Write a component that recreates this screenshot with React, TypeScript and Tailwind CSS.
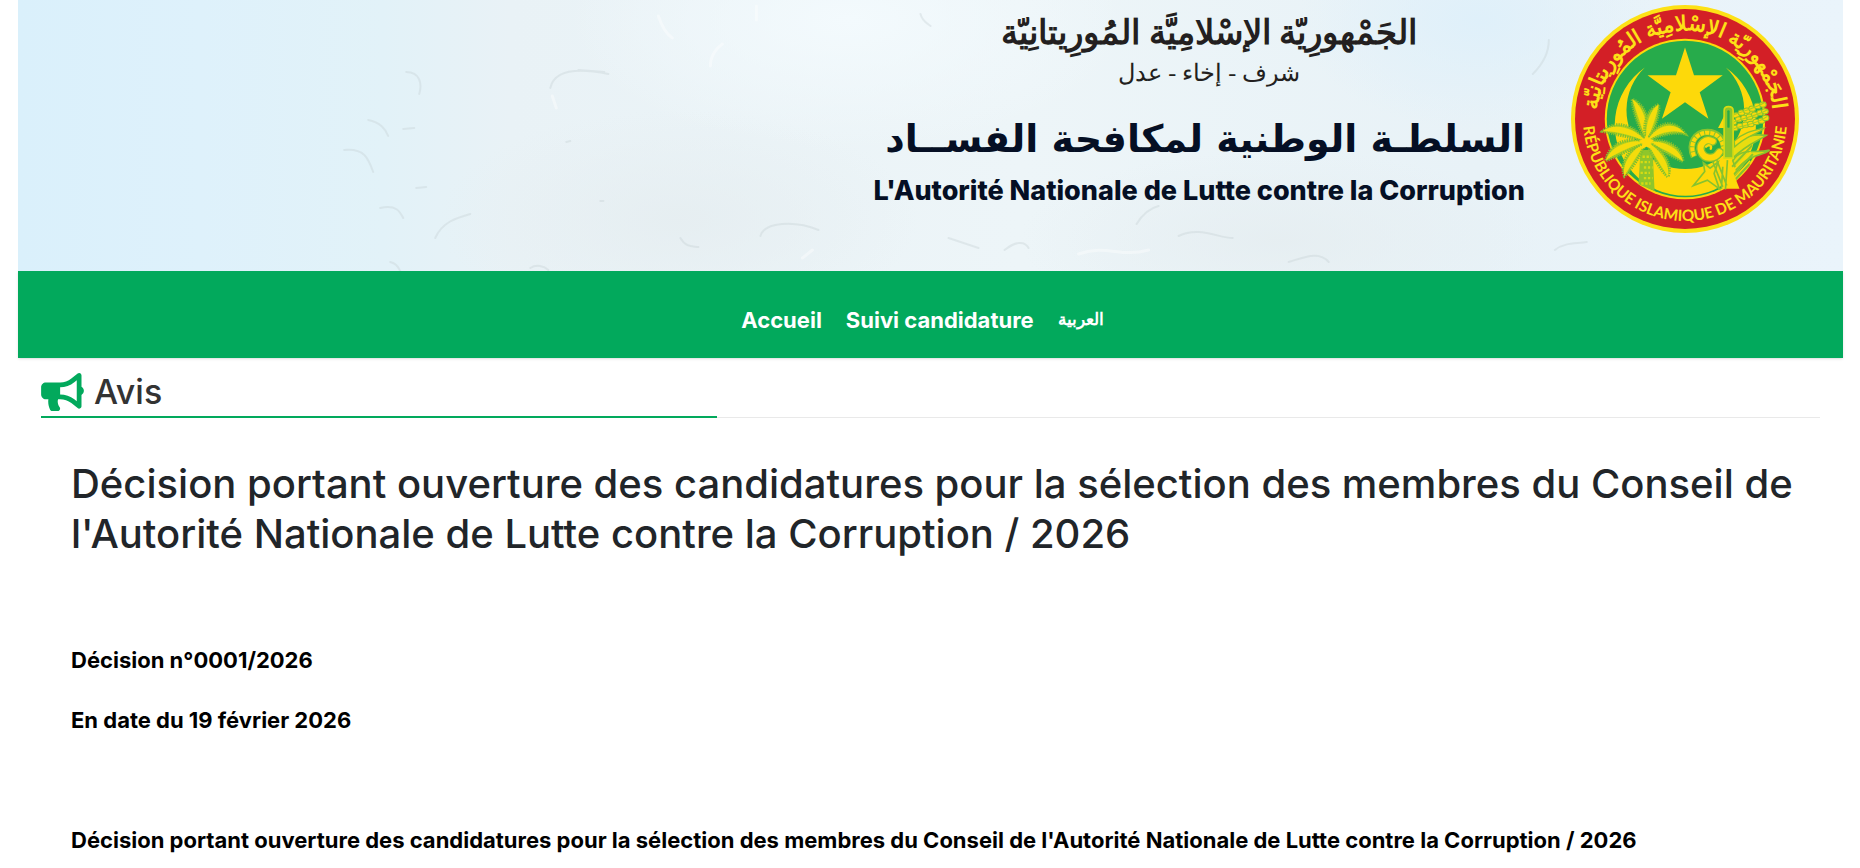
import { FaBullhorn } from 'react-icons/fa';

interface Frond {
  x: number;
  y: number;
  bend: number;
}

const navLinks = [
  { label: 'Accueil', href: '#accueil' },
  { label: 'Suivi candidature', href: '#suivi' },
];

const fronds: Frond[] = [
  { x: 245, y: 298, bend: 12 },
  { x: 324, y: 314, bend: -8 },
  { x: 404, y: 402, bend: -34 },
  { x: 397, y: 484, bend: -18 },
  { x: 352, y: 530, bend: -12 },
  { x: 222, y: 528, bend: 14 },
  { x: 166, y: 482, bend: 20 },
  { x: 156, y: 394, bend: 22 },
];

// Leaf outline going from the top of the trunk to (x, y)
const leaf = ({ x, y, bend }: Frond, width: number): string => {
  const cx = 288;
  const cy = 425;
  const dx = x - cx;
  const dy = y - cy;
  const len = Math.hypot(dx, dy);
  const nx = -dy / len;
  const ny = dx / len;
  const point = (t: number, off: number) =>
    `${Math.round(cx + dx * t + nx * off)} ${Math.round(cy + dy * t + ny * off)}`;
  return `M${cx} ${cy} C${point(0.35, bend + width)} ${point(0.8, bend + width)} ${x} ${y} C${point(0.8, bend - width)} ${point(0.35, bend - width)} ${cx} ${cy}Z`;
};

const wheat = [
  [556, 346], [572, 338], [588, 332], [604, 326], [620, 318], [636, 314],
  [548, 366], [564, 358], [580, 354], [596, 350], [612, 344], [628, 338], [642, 334],
  [552, 384], [568, 378], [584, 374], [600, 372], [616, 366], [632, 362], [644, 354],
];

const Emblem: React.FC = () => {
  return (
    <svg viewBox="62 16 682 682" className="size-[228px] shrink-0" role="img" aria-label="Sceau de la Mauritanie">
      <defs>
        <path id="arc-top" d="M138 357 A265 265 0 0 1 668 357" />
        <path id="arc-bottom" d="M98 357 A305 305 0 0 0 708 357" />
      </defs>
      <circle cx="403" cy="357" r="341" fill="#fde116" />
      <circle cx="403" cy="357" r="329" fill="#d31f26" />
      <circle cx="403" cy="357" r="240" fill="#fdd90a" />
      <circle cx="403" cy="357" r="234" fill="#27ab4b" />

      <path d="M283 203 A211 211 0 1 0 525 203 A176 176 0 1 1 283 203Z" fill="#fdd90a" />
      <path d="M403 143 L430 226 L516 226 L447 277 L473 356 L403 307 L334 356 L360 277 L291 226 L376 226Z" fill="#fdd90a" />

      {/* Palmier */}
      <path d="M270 450 L306 450 L312 572 L264 552Z" fill="#8fc62b" />
      <path d="M276 470h26M270 486h28M280 502h26M270 518h28M280 534h26M272 550h28" stroke="#d8db12" strokeWidth="7" strokeDasharray="7 5" />
      {fronds.map((frond) => (
        <g key={`${frond.x}-${frond.y}`}>
          <path d={leaf(frond, 21)} fill="#b5d01c" stroke="#7fc030" strokeWidth="9" strokeDasharray="4 3" />
          <path d={leaf(frond, 12)} fill="#f4dc0c" />
        </g>
      ))}
      <path d="M288 404 L296 416 L310 420 L300 432 L303 447 L288 440 L274 447 L276 432 L265 422 L281 416Z" fill="#fdd90a" />

      {/* Corne */}
      <path d="M430 470 C412 430 434 396 470 396 C500 396 520 416 520 448" fill="none" stroke="#86c32f" strokeWidth="20" />
      <path d="M430 468 C414 430 436 398 470 398 C498 398 516 416 518 448" fill="none" stroke="#fdd90a" strokeWidth="12" strokeDasharray="12 3" />
      <path d="M486 424 C464 412 444 432 451 454 C460 478 492 480 506 456" fill="none" stroke="#86c32f" strokeWidth="26" strokeLinecap="round" />
      <path d="M486 424 C464 412 444 432 451 454 C460 478 492 480 506 456" fill="none" stroke="#fdd90a" strokeWidth="18" strokeLinecap="round" />
      <path d="M466 440 C474 432 484 436 480 446" fill="none" stroke="#fdd90a" strokeWidth="7" strokeLinecap="round" />

      {/* Mil */}
      {wheat.map(([x, y]) => (
        <ellipse key={`${x}-${y}`} cx={x} cy={y} rx="10" ry="8" fill="#fdd90a" stroke="#86c32f" strokeWidth="3" />
      ))}
      <path d="M546 346 C580 332 610 326 644 306M544 368 C580 352 612 350 648 330M544 388 C580 374 616 374 648 350" fill="none" stroke="#a6cd22" strokeWidth="3" />
      <path d="M540 452 C560 412 598 400 646 406 C620 424 590 430 546 474Z" fill="#e8dd10" stroke="#86c32f" strokeWidth="5" />
      <path d="M546 482 C570 440 612 462 656 450 C628 472 604 456 556 508Z" fill="#e8dd10" stroke="#86c32f" strokeWidth="5" />
      <path d="M550 424 C576 398 606 392 640 384 C618 404 590 404 552 440Z" fill="#fdd90a" stroke="#86c32f" strokeWidth="4" />
      <path d="M544 500 L604 436M548 524 L606 462M552 540 L596 492" stroke="#86c32f" strokeWidth="6" />
      <path d="M546 512 L600 456M550 534 L598 482" stroke="#fdd90a" strokeWidth="5" />

      <path d="M502 384 L525 338 L525 384Z" fill="#fdd90a" />
      <path d="M512 566 L532 478 L566 566Z" fill="#fdd90a" />
      <path d="M520 474 V332 Q520 320 533 320 Q547 320 547 332 V474Z" fill="#8bc52c" stroke="#d8db12" strokeWidth="5" />
      <path d="M533 334 V380" stroke="#27ab4b" strokeWidth="7" strokeLinecap="round" />

      <path d="M458 488 L462 514 L428 556 L470 540 L506 566 L490 520 L502 486 L478 504Z" fill="#fdd90a" stroke="#86c32f" strokeWidth="5" />
      <path d="M486 484 L516 560M498 480 L528 556M516 500 L512 566M530 480 L524 568" stroke="#86c32f" strokeWidth="5" />

      <text fill="#fde116" fontSize="46" fontWeight="700" className="font-['Lato',sans-serif]" textAnchor="middle">
        <textPath href="#arc-bottom" startOffset="50%">RÉPUBLIQUE ISLAMIQUE DE MAURITANIE</textPath>
      </text>
      <text fill="#fde116" fontSize="62" fontWeight="700" className="font-['Liberation_Serif',serif]" textAnchor="middle">
        <textPath href="#arc-top" startOffset="50%">الجَمْهورِيّة الإسْلامِيَّة المُورِيتانِيّة</textPath>
      </text>
    </svg>
  );
};

// Plaster texture behind the banner
const BannerTexture: React.FC = () => {
  return (
    <svg viewBox="0 0 1824 271" preserveAspectRatio="none" className="absolute inset-0 w-full h-full" aria-hidden="true">
      <defs>
        <linearGradient id="base" x1="0" x2="1" y1="0" y2="0">
          <stop offset="0" stopColor="#daf0fb" />
          <stop offset="0.1" stopColor="#def1fb" />
          <stop offset="0.2" stopColor="#e2f2f8" />
          <stop offset="0.27" stopColor="#e9f2f6" />
          <stop offset="0.55" stopColor="#edf5f8" />
          <stop offset="0.8" stopColor="#e8f2f7" />
          <stop offset="1" stopColor="#eaf4fb" />
        </linearGradient>
        <radialGradient id="light">
          <stop offset="0" stopColor="#f3fafd" />
          <stop offset="1" stopColor="#f3fafd" stopOpacity="0" />
        </radialGradient>
        <radialGradient id="shade">
          <stop offset="0" stopColor="#e5edf0" stopOpacity="0.8" />
          <stop offset="1" stopColor="#e5edf0" stopOpacity="0" />
        </radialGradient>
        <radialGradient id="sky">
          <stop offset="0" stopColor="#dff0fa" />
          <stop offset="1" stopColor="#dff0fa" stopOpacity="0" />
        </radialGradient>
      </defs>
      <rect width="1824" height="271" fill="url(#base)" />
      <ellipse cx="830" cy="20" rx="280" ry="130" fill="url(#light)" />
      <ellipse cx="660" cy="220" rx="240" ry="110" fill="url(#shade)" />
      <ellipse cx="1260" cy="240" rx="260" ry="90" fill="url(#shade)" />
      <ellipse cx="1460" cy="20" rx="180" ry="110" fill="url(#sky)" />
      <g fill="none" stroke="#c3cdd1" strokeOpacity="0.35" strokeWidth="2" strokeLinecap="round">
        <path d="M388 72 C402 72 404 84 401 94M350 120 C362 122 368 130 370 136M326 150 C346 148 350 158 355 172M560 70 L586 72M532 88 C536 70 560 68 590 74M417 238 C424 222 438 218 452 214M362 208 C378 204 382 212 385 218M742 236 C746 222 776 220 800 230M662 238 C668 248 674 246 680 247M512 268 C518 264 526 266 530 270M372 262 C380 264 380 268 382 271" />
        <path d="M385 129 L396 128M398 188 L408 187M548 142 L552 141M582 201 L585 201M902 14 C904 22 910 24 912 26M1514 74 C1526 62 1530 50 1530 40M1118 224 C1124 214 1132 208 1140 206M1160 236 C1180 226 1200 238 1214 238M1270 262 C1284 258 1300 250 1310 262M1536 250 C1546 242 1558 244 1568 242M930 238 L960 248M986 250 C996 242 1006 240 1010 248" />
      </g>
      <g fill="none" stroke="#fff" strokeOpacity="0.4" strokeWidth="3" strokeLinecap="round">
        <path d="M640 16 C644 28 648 34 654 38M738 6 L738 20M692 66 C692 56 698 48 704 44M534 96 L538 108M784 258 L794 250M1060 254 C1090 244 1100 258 1130 250" />
      </g>
    </svg>
  );
};

export default function App() {
  return (
    <div className="min-h-screen bg-white pr-[17px] pl-[18px] font-['Inter',sans-serif] text-[#212529]">
      <header className="relative overflow-hidden">
        <BannerTexture />
        <div className="relative flex items-start justify-end gap-[46px] pt-[5px] pr-11 pb-[38px]">
          <div className="flex flex-col items-end text-[#050f24]">
            <div className="flex flex-col items-center self-center pt-[2px] pl-5 text-[#231f20]" dir="rtl" lang="ar">
              <p className="text-[34px] leading-[52px] font-bold font-['Liberation_Serif',serif]">الجَمْهورِيّة الإسْلامِيَّة المُورِيتانِيّة</p>
              <p className="text-2xl leading-7 font-['Liberation_Serif',serif]">شرف - إخاء - عدل</p>
            </div>
            <p className="pt-5 text-[38px] leading-[64px] font-bold font-['DejaVu_Sans',sans-serif]" dir="rtl" lang="ar">
              السلطـة الوطنية لمكافحة الفســاد
            </p>
            <p className="text-[27px] leading-10 font-extrabold">L'Autorité Nationale de Lutte contre la Corruption</p>
          </div>
          <Emblem />
        </div>
      </header>

      <nav className="flex items-center justify-center gap-6 bg-[#02a95c] pt-[31px] pr-4 pb-5 text-[22px] leading-9 font-bold text-white shadow">
        {navLinks.map((link) => (
          <a key={link.href} href={link.href}>{link.label}</a>
        ))}
        <a href="#ar" lang="ar" className="text-[17px] leading-9 font-['Liberation_Serif',serif]">العربية</a>
      </nav>

      <main className="px-[23px] pt-[11px]">
        <div className="border-b border-[#e9e9e9]">
          <h2 className="-mb-px flex w-[38%] items-center gap-[10px] border-b-2 border-[#02a95c] pb-px text-[34px] leading-[46px] font-medium text-[#333]">
            <FaBullhorn className="h-[38px] w-[43px] text-[#02a95c]" />
            Avis
          </h2>
        </div>

        <article className="pt-[41px] pr-4 pl-[30px]">
          <h1 className="mb-[83px] text-[40px] leading-[50px] font-medium">
            Décision portant ouverture des candidatures pour la sélection des membres du Conseil de l'Autorité Nationale de Lutte contre la Corruption / 2026
          </h1>
          <div className="flex flex-col gap-6 text-[22px] leading-9 font-bold text-black">
            <p>Décision n°0001/2026</p>
            <p>En date du 19 février 2026</p>
            <p className="pt-[60px]">
              Décision portant ouverture des candidatures pour la sélection des membres du Conseil de l'Autorité Nationale de Lutte contre la Corruption / 2026
            </p>
          </div>
        </article>
      </main>
    </div>
  );
}
